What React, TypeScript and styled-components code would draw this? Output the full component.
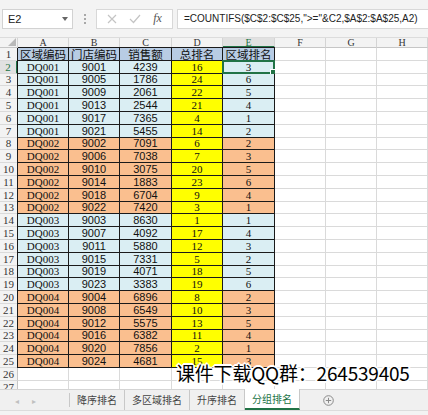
import styled, { createGlobalStyle } from "styled-components";

const GlobalStyle = createGlobalStyle`
  html, body { margin: 0; padding: 0; background: #fff; overflow: hidden; }
  * { box-sizing: border-box; }
`;

const COLS = "18px 51px 51px 52px 51px 52px 51px 51px 51px";
// rows are 12.8px apart on screen; snap each one to whole pixels
const rowH = (i: number) => Math.round((i + 1) * 12.8) - Math.round(i * 12.8);

const data: string[][] = [
  ["DQ001", "9001", "4239", "16", "3"],
  ["DQ001", "9005", "1786", "24", "6"],
  ["DQ001", "9009", "2061", "22", "5"],
  ["DQ001", "9013", "2544", "21", "4"],
  ["DQ001", "9017", "7365", "4", "1"],
  ["DQ001", "9021", "5455", "14", "2"],
  ["DQ002", "9002", "7091", "6", "2"],
  ["DQ002", "9006", "7038", "7", "3"],
  ["DQ002", "9010", "3075", "20", "5"],
  ["DQ002", "9014", "1883", "23", "6"],
  ["DQ002", "9018", "6704", "9", "4"],
  ["DQ002", "9022", "7420", "3", "1"],
  ["DQ003", "9003", "8630", "1", "1"],
  ["DQ003", "9007", "4092", "17", "4"],
  ["DQ003", "9011", "5880", "12", "3"],
  ["DQ003", "9015", "7331", "5", "2"],
  ["DQ003", "9019", "4071", "18", "5"],
  ["DQ003", "9023", "3383", "19", "6"],
  ["DQ004", "9004", "6896", "8", "2"],
  ["DQ004", "9008", "6549", "10", "3"],
  ["DQ004", "9012", "5575", "13", "5"],
  ["DQ004", "9016", "6382", "11", "4"],
  ["DQ004", "9020", "7856", "2", "1"],
  ["DQ004", "9024", "4681", "15", "3"],
];

const headers = ["区域编码", "门店编码", "销售额", "总排名", "区域排名"];
const letters = ["A", "B", "C", "D", "E", "F", "G", "H"];
const tabs = ["降序排名", "多区域排名", "升序排名", "分组排名"];

const groupFill = (code: string) =>
  code === "DQ001" || code === "DQ003" ? "#daeef3" : "#fabf8f";

export default function App() {
  return (
    <S.Page>
      <GlobalStyle />
      <S.Toolbar>
        <S.NameBox>
          E2
          <S.Caret />
        </S.NameBox>
        <S.Dots>
          <i />
          <i />
          <i />
        </S.Dots>
        <S.IconBox>
          <svg width="10" height="10" viewBox="0 0 10 10">
            <path d="M1 1 L9 9 M9 1 L1 9" stroke="#c4c4c4" strokeWidth="1.2" />
          </svg>
          <svg width="12" height="10" viewBox="0 0 12 10">
            <path d="M1 5 L4.5 8.5 L11 1" stroke="#c4c4c4" strokeWidth="1.2" fill="none" />
          </svg>
          <S.Fx>fx</S.Fx>
        </S.IconBox>
        <S.FormulaBox>=COUNTIFS($C$2:$C$25,"&gt;="&amp;C2,$A$2:$A$25,A2)</S.FormulaBox>
      </S.Toolbar>

      <S.Sheet>
        <S.Row $h={10}>
          <S.Corner>
            <svg width="8" height="8" viewBox="0 0 8 8">
              <path d="M8 0 L8 8 L0 8 Z" fill="#b9b9b9" />
            </svg>
          </S.Corner>
          {letters.map((l) => (
            <S.ColHead key={l} $active={l === "E"}>
              {l}
            </S.ColHead>
          ))}
        </S.Row>

        <S.Row $h={rowH(0)}>
          <S.RowHead>1</S.RowHead>
          {headers.map((h, i) => (
            <S.Cell key={h} $fill="#b8cce4" $boxed $first={i === 0} $top $cjk>
              {h}
            </S.Cell>
          ))}
          <S.Cell />
          <S.Cell />
          <S.Cell />
        </S.Row>

        {data.map((r, ri) => {
          const fill = groupFill(r[0]);
          return (
            <S.Row key={ri} $h={rowH(ri + 1)}>
              <S.RowHead $active={ri === 0}>{ri + 2}</S.RowHead>
              <S.Cell $fill={fill} $boxed $first $serif>
                {r[0]}
              </S.Cell>
              <S.Cell $fill={fill} $boxed>
                {r[1]}
              </S.Cell>
              <S.Cell $fill={fill} $boxed>
                {r[2]}
              </S.Cell>
              <S.Cell $fill="#ffff00" $boxed $serif>
                {r[3]}
              </S.Cell>
              <S.Cell $fill={fill} $boxed $serif>
                {r[4]}
                {ri === 0 && <S.Selection />}
              </S.Cell>
              <S.Cell />
              <S.Cell />
              <S.Cell />
            </S.Row>
          );
        })}

        {[26, 27].map((n) => (
          <S.Row key={n} $h={rowH(n - 1)}>
            <S.RowHead>{n}</S.RowHead>
            {letters.map((l) => (
              <S.Cell key={l} />
            ))}
          </S.Row>
        ))}
      </S.Sheet>

      <S.TabBar>
        <S.Nav>
          <span>◂</span>
          <span>▸</span>
        </S.Nav>
        {tabs.map((t, i) => (
          <S.Tab key={t} $active={i === tabs.length - 1}>
            {t}
          </S.Tab>
        ))}
        <S.AddTab>
          <svg width="11" height="11" viewBox="0 0 11 11">
            <circle cx="5.5" cy="5.5" r="4.8" stroke="#8a8a8a" strokeWidth="1" fill="none" />
            <path d="M5.5 2.8 V8.2 M2.8 5.5 H8.2" stroke="#8a8a8a" strokeWidth="1" />
          </svg>
        </S.AddTab>
      </S.TabBar>
      <S.StatusBar />

      <S.Watermark>课件下载QQ群：264539405</S.Watermark>
    </S.Page>
  );
}

const S = {
  Page: styled.div`
    position: relative;
    width: 428px;
    height: 415px;
    overflow: hidden;
    background: #fff;
    font-family: "Liberation Sans", Arial, sans-serif;
  `,
  Toolbar: styled.div`
    height: 38px;
    background: #f3f3f3;
    display: flex;
    align-items: center;
    padding: 0 0 0 2px;
    border-bottom: 1px solid #dcdcdc;
  `,
  NameBox: styled.div`
    position: relative;
    width: 71px;
    height: 20px;
    background: #fff;
    border: 1px solid #d2d2d2;
    font-size: 11px;
    color: #222;
    line-height: 18px;
    padding-left: 5px;
  `,
  Caret: styled.span`
    position: absolute;
    right: 4px;
    top: 7px;
    border-left: 3px solid transparent;
    border-right: 3px solid transparent;
    border-top: 4px solid #666;
  `,
  Dots: styled.div`
    width: 23px;
    display: flex;
    flex-direction: column;
    align-items: center;
    gap: 2px;
    i {
      width: 2px;
      height: 2px;
      background: #a8a8a8;
    }
  `,
  IconBox: styled.div`
    width: 77px;
    height: 20px;
    background: #fff;
    border: 1px solid #d8d8d8;
    display: flex;
    align-items: center;
    justify-content: space-around;
    padding: 0 4px;
  `,
  Fx: styled.span`
    font-family: "Liberation Serif", serif;
    font-style: italic;
    font-size: 12px;
    color: #555;
  `,
  FormulaBox: styled.div`
    flex: 1;
    margin-left: 4px;
    height: 20px;
    background: #fff;
    border: 1px solid #d8d8d8;
    border-right: none;
    font-size: 10px;
    color: #222;
    line-height: 18px;
    padding-left: 6px;
    white-space: nowrap;
    overflow: hidden;
  `,
  Sheet: styled.div`
    height: 351px;
    overflow: hidden;
  `,
  Row: styled.div<{ $h: number }>`
    display: grid;
    grid-template-columns: ${COLS};
    grid-template-rows: ${(p) => p.$h}px;
    height: ${(p) => p.$h}px;
  `,
  Corner: styled.div`
    background: #f3f3f3;
    border-right: 1px solid #d4d4d4;
    border-bottom: 1px solid #c6c6c6;
    display: flex;
    align-items: flex-end;
    justify-content: flex-end;
    padding: 0 1px 1px 0;
  `,
  ColHead: styled.div<{ $active?: boolean }>`
    background: ${(p) => (p.$active ? "#e1e1e1" : "#f3f3f3")};
    border-right: 1px solid #d4d4d4;
    border-bottom: ${(p) => (p.$active ? "2px solid #217346" : "1px solid #c6c6c6")};
    font-family: "Liberation Serif", serif;
    font-size: 10px;
    line-height: 9px;
    text-align: center;
    color: ${(p) => (p.$active ? "#217346" : "#333")};
    overflow: hidden;
  `,
  RowHead: styled.div<{ $active?: boolean }>`
    display: flex;
    align-items: center;
    justify-content: center;
    background: ${(p) => (p.$active ? "#e1e1e1" : "#f3f3f3")};
    border-right: ${(p) => (p.$active ? "2px solid #217346" : "1px solid #c6c6c6")};
    border-bottom: 1px solid #dadada;
    font-family: "Liberation Serif", serif;
    font-size: 11px;
    line-height: 11px;
    color: ${(p) => (p.$active ? "#217346" : "#333")};
    overflow: hidden;
  `,
  Cell: styled.div<{
    $fill?: string;
    $boxed?: boolean;
    $first?: boolean;
    $top?: boolean;
    $serif?: boolean;
    $cjk?: boolean;
  }>`
    position: relative;
    display: flex;
    align-items: center;
    justify-content: center;
    background: ${(p) => p.$fill ?? "#fff"};
    border-right: 1px solid ${(p) => (p.$boxed ? "#1a1a1a" : "#dadada")};
    border-bottom: 1px solid ${(p) => (p.$boxed ? "#1a1a1a" : "#dadada")};
    box-shadow: ${(p) =>
      [p.$first ? "-1px 0 0 #1a1a1a" : "", p.$top ? "0 -1px 0 #1a1a1a" : ""]
        .filter(Boolean)
        .join(", ") || "none"};
    font-family: ${(p) =>
      p.$cjk
        ? '"Noto Sans CJK SC", sans-serif'
        : p.$serif
        ? '"Liberation Serif", serif'
        : '"Liberation Sans", Arial, sans-serif'};
    font-size: ${(p) => (p.$cjk ? "11.5px" : "11px")};
    line-height: 11px;
    color: #111;
    white-space: nowrap;
  `,
  Selection: styled.span`
    position: absolute;
    left: -1px;
    top: -1px;
    right: -1px;
    bottom: -1px;
    border: 2px solid #217346;
    &::after {
      content: "";
      position: absolute;
      right: -4px;
      bottom: -4px;
      width: 5px;
      height: 5px;
      background: #217346;
      border: 1px solid #fff;
    }
  `,
  TabBar: styled.div`
    height: 21px;
    background: #f0f0f0;
    border-top: 1px solid #d4d4d4;
    display: flex;
    align-items: stretch;
    font-family: "Noto Sans CJK SC", sans-serif;
    font-size: 10px;
    color: #444;
  `,
  Nav: styled.div`
    width: 70px;
    display: flex;
    align-items: center;
    gap: 13px;
    padding-left: 15px;
    color: #c0c0c0;
    font-size: 8px;
    border-right: 1px solid #c8c8c8;
    margin: 3px 0;
  `,
  Tab: styled.div<{ $active?: boolean }>`
    display: flex;
    align-items: center;
    padding: 0 7px;
    background: ${(p) => (p.$active ? "#fff" : "transparent")};
    color: ${(p) => (p.$active ? "#217346" : "#444")};
    border-bottom: ${(p) => (p.$active ? "2px solid #217346" : "2px solid transparent")};
    border-right: 1px solid ${(p) => (p.$active ? "#c8c8c8" : "transparent")};
    margin-top: ${(p) => (p.$active ? "-1px" : "0")};
    & + & {
      box-shadow: -1px 0 0 #c8c8c8;
    }
  `,
  AddTab: styled.div`
    display: flex;
    align-items: center;
    padding-left: 23px;
  `,
  StatusBar: styled.div`
    height: 5px;
    background: #f3f3f3;
    border-top: 1px solid #dcdcdc;
  `,
  Watermark: styled.div`
    position: absolute;
    left: 176px;
    top: 360px;
    font-family: "Noto Sans CJK SC", sans-serif;
    font-size: 19px;
    letter-spacing: -0.2px;
    line-height: 26px;
    color: #000;
    white-space: nowrap;
    text-shadow: -1px -1px 0 #fff, 1px -1px 0 #fff, -1px 1px 0 #fff, 1px 1px 0 #fff,
      0 -2px 0 #fff, 0 2px 0 #fff, -2px 0 0 #fff, 2px 0 0 #fff;
  `,
};
